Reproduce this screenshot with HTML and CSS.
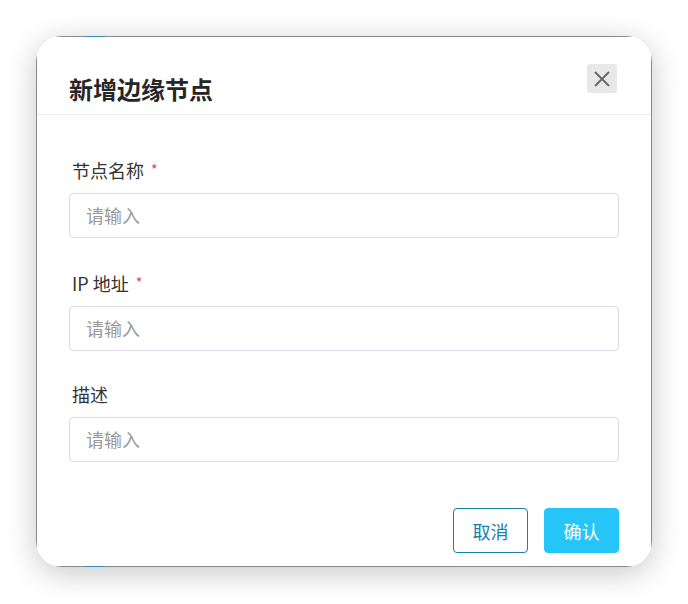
FILE: index.html
```html
<!DOCTYPE html>
<html lang="zh-CN">
<head>
<meta charset="utf-8">
<title>新增边缘节点</title>
<link rel="stylesheet" href="styles.css">
</head>
<body>
<div class="stage">
  <div class="frame">
    <div class="dialog">
      <span class="peek peek-top"></span>
      <span class="peek peek-bottom"></span>
      <div class="header">
        <h2 class="title">新增边缘节点</h2>
        <button class="close" aria-label="关闭">
          <svg width="18" height="18" viewBox="0 0 18 18"><path d="M2 2 L16 16 M16 2 L2 16" stroke="#666" stroke-width="1.8" fill="none"/></svg>
        </button>
      </div>
      <div class="body">
        <div class="field">
          <label class="label">节点名称<span class="req">*</span></label>
          <div class="input">请输入</div>
        </div>
        <div class="field">
          <label class="label">IP 地址<span class="req">*</span></label>
          <div class="input">请输入</div>
        </div>
        <div class="field">
          <label class="label">描述</label>
          <div class="input">请输入</div>
        </div>
      </div>
      <div class="footer">
        <button class="btn btn-cancel">取消</button>
        <button class="btn btn-ok">确认</button>
      </div>
    </div>
  </div>
</div>
</body>
</html>
```

FILE: styles.css
```css
html, body {
  margin: 0;
  padding: 0;
  background: #ffffff;
  width: 688px;
  height: 604px;
  overflow: hidden;
  font-family: "Noto Sans", "Noto Sans CJK SC", sans-serif;
}

.stage {
  padding: 36px 0 0 36px;
}

.frame {
  width: 616px;
  height: 531px;
  border-radius: 26px;
  overflow: hidden;
  box-shadow: 0 6px 30px rgba(0, 0, 0, 0.22);
  background: #ffffff;
}

.dialog {
  position: relative;
  box-sizing: border-box;
  height: 531px;
  border: 1px solid #8a8a8a;
  background: #ffffff;
  display: flex;
  flex-direction: column;
}

.peek {
  position: absolute;
  left: 47px;
  width: 21px;
  height: 1px;
  background: #3a8fb0;
}
.peek-top { top: -1px; }
.peek-bottom { bottom: -1px; }

.header {
  height: 77px;
  border-bottom: 1px solid #ececf0;
  display: flex;
  justify-content: space-between;
  align-items: flex-start;
  padding: 0 34px 0 32px;
}

.title {
  margin: 36px 0 0 0;
  font-size: 24px;
  line-height: 32px;
  font-weight: 700;
  color: #262626;
  font-family: "Noto Sans CJK SC", sans-serif;
}

.close {
  margin-top: 27px;
  width: 30px;
  height: 29px;
  border: none;
  border-radius: 3px;
  background: #e8e8e8;
  padding: 0;
  display: flex;
  align-items: center;
  justify-content: center;
}

.body {
  padding: 42px 32px 0 32px;
  display: flex;
  flex-direction: column;
  gap: 31.5px;
}

.field {
  display: flex;
  flex-direction: column;
}

.label {
  font-size: 18px;
  line-height: 24px;
  color: #333333;
  padding-left: 3px;
  margin-bottom: 11px;
  font-family: "Noto Sans CJK SC", sans-serif;
}

.req {
  color: #e3386a;
  font-size: 14px;
  margin-left: 7px;
  vertical-align: 3px;
}

.input {
  box-sizing: border-box;
  height: 45px;
  border: 1px solid #dddbe5;
  border-radius: 4px;
  padding: 0 16px;
  font-size: 18px;
  line-height: 43px;
  color: #9a9a9a;
  font-family: "Noto Sans CJK SC", sans-serif;
}

.footer {
  display: flex;
  justify-content: flex-end;
  gap: 16px;
  padding: 46px 32px 0 0;
}

.btn {
  box-sizing: border-box;
  width: 75px;
  height: 45px;
  border-radius: 4px;
  font-size: 18px;
  font-family: "Noto Sans CJK SC", sans-serif;
  padding: 0;
}

.btn-cancel {
  background: #ffffff;
  border: 1px solid #1b7fa7;
  color: #1b7fa7;
}

.btn-ok {
  background: #25c5f7;
  border: 1px solid #25c5f7;
  color: #ffffff;
}
```
